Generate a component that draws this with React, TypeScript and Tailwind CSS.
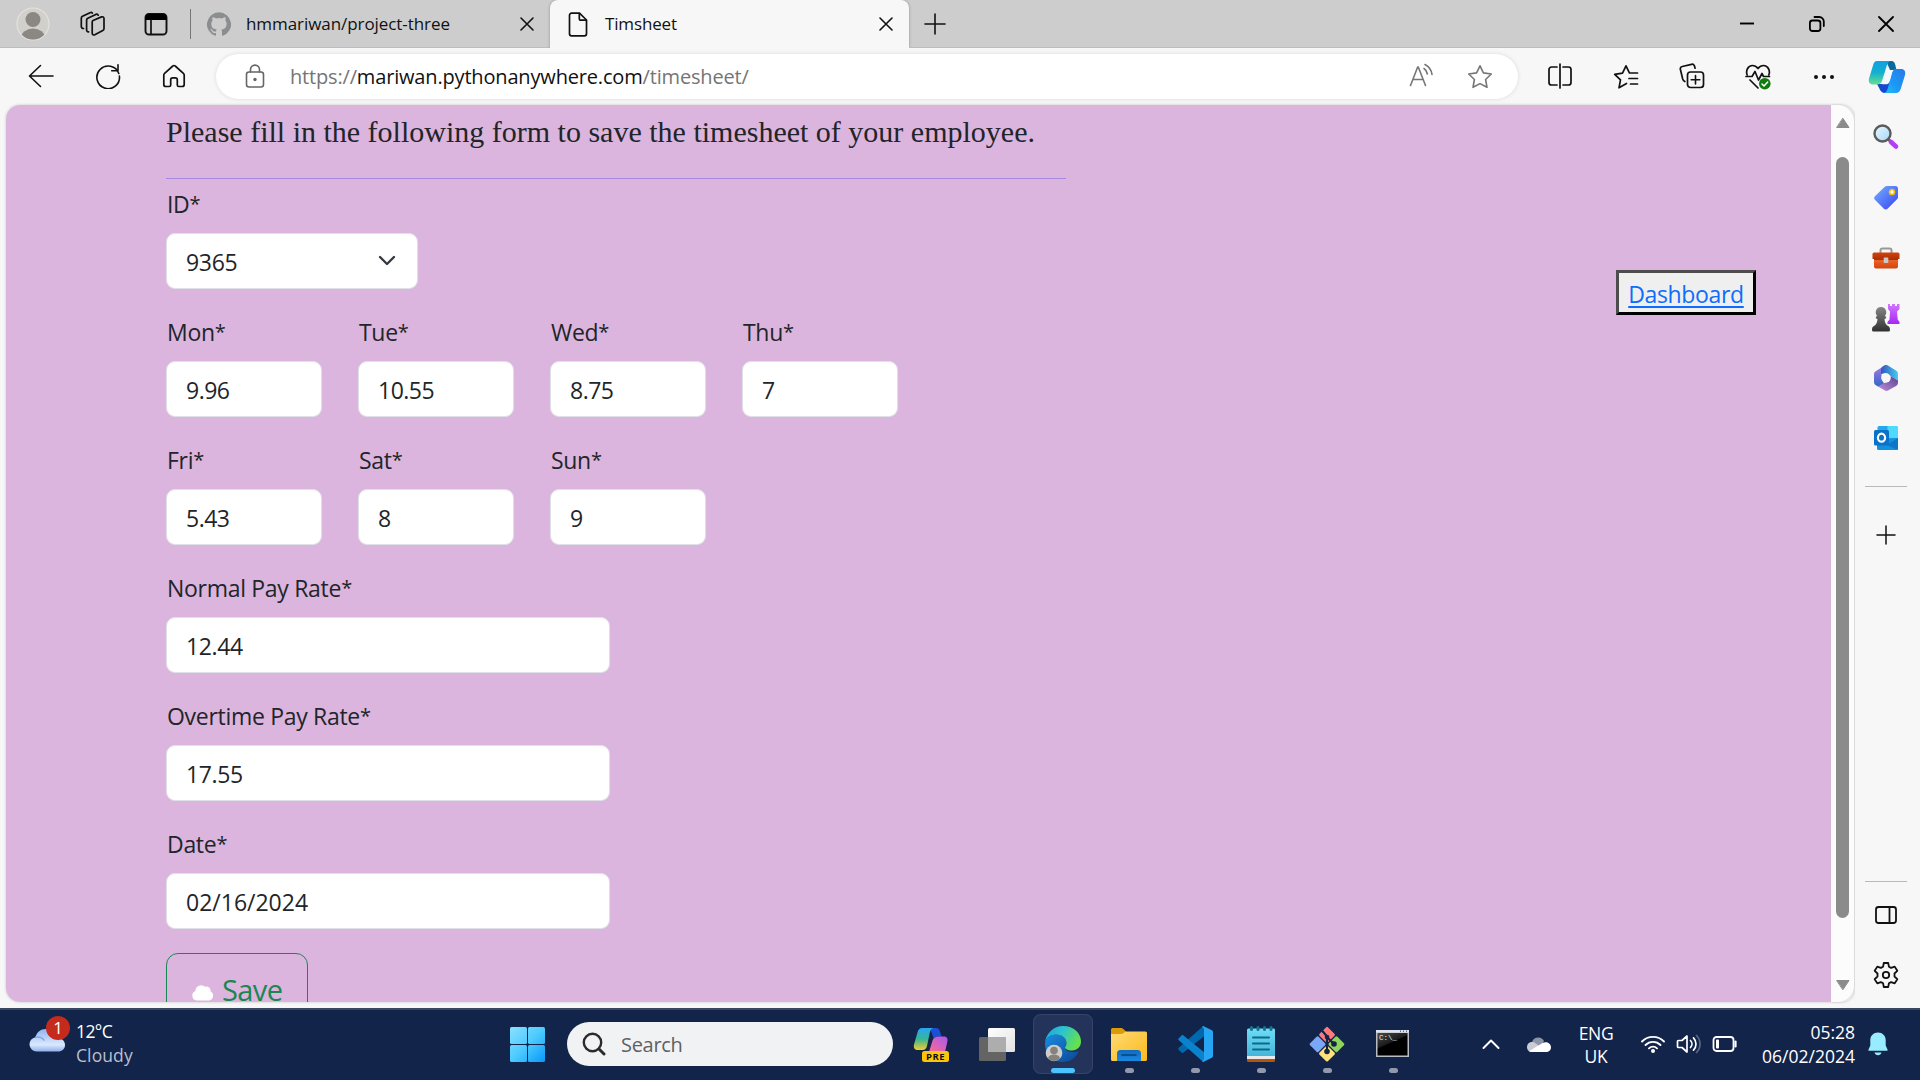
import React from 'react';

type IconProps = {
  w: number;
  h: number;
  className?: string;
  children: React.ReactNode;
};

const Icon = ({ w, h, className = '', children }: IconProps) => (
  <svg
    width={w}
    height={h}
    viewBox={`0 0 ${w} ${h}`}
    className={`block shrink-0 ${className}`}
    fill="none"
    strokeLinecap="round"
    strokeLinejoin="round"
  >
    {children}
  </svg>
);

/* ---------- Tab strip ---------- */

const CloseX = ({ s = 12 }: { s?: number }) => (
  <Icon w={s + 2} h={s + 2}>
    <path d={`M1 1L${s + 1} ${s + 1}M${s + 1} 1L1 ${s + 1}`} stroke="#111" strokeWidth="1.6" />
  </Icon>
);

const TabStrip = () => (
  <div className="flex h-12 items-stretch bg-[#cdcdcd] text-[17px] text-[#111]">
    <div className="flex w-[550px] items-center border-b border-[#bdbdbd]">
      <Icon w={34} h={34} className="ml-4">
        <clipPath id="avatar">
          <circle cx="17" cy="17" r="15.6" />
        </clipPath>
        <circle cx="17" cy="17" r="16" fill="#d2d0cb" stroke="#e4e2dd" strokeWidth="1.2" />
        <g fill="#8b8783" clipPath="url(#avatar)">
          <circle cx="17" cy="12.5" r="7.5" />
          <ellipse cx="17" cy="31" rx="12" ry="9.5" />
        </g>
      </Icon>
      <Icon w={26} h={26} className="ml-[30px]">
        <g stroke="#111" strokeWidth="1.7">
          <path d="M13 9.5l8.500-3.600a1.800 1.800 0 0 1 2.500 1.600v10.200a2 2 0 0 1-1.200 1.800l-8 4.300a1.800 1.800 0 0 1-2.600-1.600V11a1.700 1.700 0 0 1 .8-1.500z" />
          <path d="M8.600 20.800C7.400 21 6.600 20 6.600 19V9.200c0-.9.400-1.500 1.200-1.900l8-3.900c1-.4 2-.2 2.400.8" />
          <path d="M3.500 17.500C2 17.500 1.300 16.500 1.300 15.500V7.200c0-.9.400-1.500 1.200-1.900L10 1.700c1-.4 1.900-.2 2.300.5" />
        </g>
      </Icon>
      <Icon w={24} h={24} className="ml-[38px]">
        <rect x="1.500" y="2" width="21" height="20.500" rx="3.500" stroke="#111" strokeWidth="1.900" />
        <path d="M1.500 8V5.500A3.500 3.500 0 0 1 5 2h14a3.500 3.500 0 0 1 3.500 3.500V8z" fill="#000" />
        <path d="M7 8v14" stroke="#111" strokeWidth="1.700" />
      </Icon>
      <div className="ml-[22px] h-[30px] w-px bg-[#777]" />
      <Icon w={24} h={24} className="ml-4">
        <path
          fill="#8b8e91"
          d="M12 .3a12 12 0 0 0-3.800 23.400c.6.100.8-.3.800-.6v-2c-3.300.7-4-1.600-4-1.600-.6-1.400-1.400-1.800-1.400-1.800-1-.7.100-.7.100-.7 1.200 0 1.900 1.200 1.900 1.200 1 1.800 2.800 1.300 3.500 1 0-.8.400-1.300.7-1.600-2.700-.3-5.500-1.300-5.500-6 0-1.200.5-2.300 1.300-3.100-.2-.4-.6-1.600 0-3.200 0 0 1-.3 3.400 1.200a11.500 11.500 0 0 1 6 0c2.300-1.500 3.300-1.200 3.300-1.200.6 1.600.2 2.800 0 3.200.9.800 1.300 1.900 1.300 3.200 0 4.600-2.800 5.600-5.500 5.900.5.400.9 1 .9 2.200v3.300c0 .3.100.7.800.6A12 12 0 0 0 12 .3"
        />
      </Icon>
      <span className="ml-[15px] w-[274px] tracking-[-0.07px]">hmmariwan/project-three</span>
      <CloseX />
    </div>
    <div className="flex w-[359px] items-center rounded-t-[8px] bg-[#f7f7f7] shadow-[0_0_3px_rgba(0,0,0,0.3)]">
      <Icon w={20} h={25} className="ml-[18px]">
        <path d="M3.500 1.200h8L18.500 8v13.800a2 2 0 0 1-2 2h-13a2 2 0 0 1-2-2V3.200a2 2 0 0 1 2-2z" stroke="#111" strokeWidth="1.700" />
        <path d="M11.300 1.500v5a1.700 1.700 0 0 0 1.700 1.700h5.300" stroke="#111" strokeWidth="1.700" />
      </Icon>
      <span className="ml-[17px] w-[274px] tracking-[-0.15px]">Timsheet</span>
      <CloseX />
    </div>
    <div className="flex flex-1 items-center border-b border-[#bdbdbd]">
      <Icon w={22} h={22} className="ml-[15px]">
        <path d="M11 1v20M1 11h20" stroke="#111" strokeWidth="1.600" />
      </Icon>
      <div className="ml-auto flex items-center pr-[26px]">
        <Icon w={16} h={16}>
          <path d="M1 7.500h14" stroke="#000" strokeWidth="1.900" strokeLinecap="butt" />
        </Icon>
        <Icon w={18} h={18} className="ml-[53px]">
          <rect x="1.900" y="5.500" width="10.500" height="10.500" rx="2.500" stroke="#000" strokeWidth="1.800" />
          <path d="M6.500 2h4.800a4.500 4.500 0 0 1 4.500 4.500v4.600" stroke="#000" strokeWidth="1.800" />
        </Icon>
        <Icon w={16} h={16} className="ml-[52px]">
          <path d="M1 1l14 14M15 1L1 15" stroke="#000" strokeWidth="1.800" />
        </Icon>
      </div>
    </div>
  </div>
);

/* ---------- Toolbar ---------- */

const Toolbar = () => (
  <div className="flex h-[57px] items-center bg-[#f7f7f7]">
    <Icon w={26} h={24} className="mb-[2px] ml-[28px]">
      <path d="M25 12H1.500M12.500 1.500L1.500 12l11 10.500" stroke="#111" strokeWidth="1.600" />
    </Icon>
    <Icon w={26} h={26} className="mb-px ml-[41px]">
      <path d="M23.800 10.500A11.300 11.300 0 1 0 24.400 13" stroke="#111" strokeWidth="1.600" />
      <path d="M23 1.800v6h-6.300" stroke="#111" strokeWidth="1.600" />
    </Icon>
    <Icon w={24} h={24} className="mb-px ml-[41px]">
      <path
        d="M12 1.500c.5 0 .9.200 1.200.5l8.200 7.300c.5.500.8 1.100.8 1.800v9.400a2 2 0 0 1-2 2h-3.400a1.500 1.500 0 0 1-1.500-1.500v-5.200a2 2 0 0 0-2-2h-2.600a2 2 0 0 0-2 2V21a1.500 1.500 0 0 1-1.500 1.500H3.800a2 2 0 0 1-2-2v-9.400c0-.7.300-1.300.8-1.800L10.800 2c.3-.3.700-.5 1.200-.5z"
        stroke="#111"
        strokeWidth="1.700"
      />
    </Icon>
    <div className="ml-[30px] flex h-[45px] w-[1302px] items-center rounded-full bg-white shadow-[0_0_4px_rgba(0,0,0,0.12)]">
      <Icon w={20} h={25} className="ml-[29px]">
        <rect x="1.500" y="8" width="17" height="15" rx="2.500" stroke="#666" strokeWidth="1.600" />
        <path d="M5.500 8V5.600a4.500 4.500 0 0 1 9 0V8" stroke="#666" strokeWidth="1.600" />
        <circle cx="10" cy="15.500" r="1.700" fill="#666" />
      </Icon>
      <span className="ml-[25px] flex-1 text-[20px] tracking-[-0.17px] text-[#757575]">
        https://<span className="text-[#111]">mariwan.pythonanywhere.com</span>/timesheet/
      </span>
      <Icon w={25} h={25} className="mb-[2px]">
        <g stroke="#767676" strokeWidth="1.600">
          <path d="M1.500 22.500L8.700 4h.6l7.200 18.500M4 16.500h10" />
          <path d="M15 5.500c2 1.300 3 3 3.400 5.500" />
          <path d="M16 1.500c4 2.200 6.500 5.500 7 10" />
        </g>
      </Icon>
      <Icon w={26} h={26} className="mr-[25px] ml-[33px]">
        <path d="M13 1.800l3.400 7.100 7.900 1.100-5.700 5.500 1.400 7.800-7-3.700-7 3.700 1.400-7.800L1.700 10l7.900-1.100z" stroke="#767676" strokeWidth="1.600" />
      </Icon>
    </div>
    <Icon w={26} h={26} className="mb-px ml-[29px]">
      <path d="M10 4H4.500a2.500 2.500 0 0 0-2.500 2.500v13A2.500 2.500 0 0 0 4.500 22H10M16 4h5.500A2.500 2.500 0 0 1 24 6.500v13a2.500 2.500 0 0 1-2.500 2.500H16M13 1v24" stroke="#111" strokeWidth="1.700" />
    </Icon>
    <Icon w={26} h={26} className="ml-[40px]">
      <path d="M13.500 19.500L6 23.800l1.500-7.900L1.700 10.300l7.800-1.200L13 1.800l3.400 7.100M17.500 9H24.500M16 14.500h8.500M17.500 20h7" stroke="#111" strokeWidth="1.700" />
    </Icon>
    <Icon w={26} h={26} className="mb-px ml-[40px]">
      <rect x="8.500" y="9" width="16" height="15.500" rx="3" stroke="#111" strokeWidth="1.700" />
      <path d="M16.500 12.500v8.500M12.200 16.700h8.600" stroke="#111" strokeWidth="1.600" />
      <path d="M5.800 18.500C4.500 17.800 4 17 3.700 16L1.400 6.500A2.500 2.500 0 0 1 3.200 3.500L12.500 1.300c1.400-.3 2.400.3 2.900 1.500l.7 2.400" stroke="#111" strokeWidth="1.700" />
    </Icon>
    <Icon w={28} h={28} className="ml-[40px]">
      <path d="M2.200 12C.5 8 2.800 2.500 7.500 2.500c2.800 0 4.300 1.500 5.500 3 1.200-1.500 2.700-3 5.500-3 4.700 0 7 5.500 5.300 9.500M5 17l8 8" stroke="#111" strokeWidth="1.700" />
      <path d="M1 13.500h6l3-5 3.500 8.500 3.500-6.500 1.500 3h6" stroke="#111" strokeWidth="1.700" />
      <circle cx="19.800" cy="20.700" r="5.800" fill="#0f7b0f" />
      <path d="M17 21l2 2 3.700-4" stroke="#fff" strokeWidth="1.500" />
    </Icon>
    <Icon w={22} h={6} className="ml-[40px]">
      <g fill="#111">
        <circle cx="3" cy="3" r="2" />
        <circle cx="11" cy="3" r="2" />
        <circle cx="19" cy="3" r="2" />
      </g>
    </Icon>
    <Icon w={38} h={34} className="ml-[33px]">
      <defs>
        <linearGradient id="cpA" x1="0" y1="0" x2="0" y2="1">
          <stop offset="0" stopColor="#0fa0e0" />
          <stop offset=".5" stopColor="#14b0cf" />
          <stop offset="1" stopColor="#66e08f" />
        </linearGradient>
        <linearGradient id="cpB" x1="1" y1="0" x2="0" y2="1">
          <stop offset="0" stopColor="#2a78e5" />
          <stop offset=".6" stopColor="#1a9af8" />
          <stop offset="1" stopColor="#1bc4f3" />
        </linearGradient>
      </defs>
      <path d="M18 1h5c3 0 3.700 2 4.300 4l1.200 5H22z" fill="#0b6a9c" />
      <path d="M9 24h9l4-3-2 12h-3c-3 0-4.500-2-5.500-4.300z" fill="#1747d1" />
      <path d="M9 1h14c-2.400.4-3.500 2-4.200 4.500l-4.600 15c-.8 2.700-2.500 4-5 4H5c-3.500 0-4.800-2.600-4-6L5 5.500C5.800 2.500 6.700 1 9 1z" fill="url(#cpA)" />
      <path d="M27 9h6c3.500 0 4.800 2.600 4 6l-4 13c-.9 3.400-2.600 5-5 5H16c2-.4 3-2 3.700-4.500l4.300-15.500c.5-2 1.200-3.500 3-4z" fill="url(#cpB)" />
      <path d="M22 10.200h3.500c-1 .8-1.500 2-1.900 3.500l-2.300 8c-.4 1.500-1.200 2.300-2.600 2.600H14c.9-.8 1.300-1.800 1.700-3l2.500-8.300c.6-1.900 1.900-2.800 3.800-2.800z" fill="#f3faff" />
    </Icon>
  </div>
);

/* ---------- Page form ---------- */

type FieldProps = { label: string; value: string; size: 'day' | 'wide' | 'select'; className?: string };

const Field = ({ label, value, size, className = '' }: FieldProps) => {
  const width = size === 'day' ? 'w-[156px]' : size === 'wide' ? 'w-[444px]' : 'w-[252px]';
  return (
    <div className={`h-32 text-[23px] leading-9 text-[#212529] ${className}`}>
      <div className="h-9 pl-px tracking-[-0.3px]">
        {label}
        <span className="align-[2px] text-[20px] leading-none">*</span>
      </div>
      <div className={`mt-[11px] flex h-14 items-center justify-between rounded-[9px] border border-[#dee2e6] bg-white pr-[21px] pl-[19px] ${width}`}>
        <span className="pt-[2px]">{value}</span>
        {size === 'select' && (
          <Icon w={18} h={12}>
            <path d="M2 2l7 7 7-7" stroke="#343a40" strokeWidth="2.400" />
          </Icon>
        )}
      </div>
    </div>
  );
};

const WEEK_ONE = [
  ['Mon', '9.96'],
  ['Tue', '10.55'],
  ['Wed', '8.75'],
  ['Thu', '7'],
];
const WEEK_TWO = [
  ['Fri', '5.43'],
  ['Sat', '8'],
  ['Sun', '9'],
];

const Page = () => (
  <main className="flex flex-1 items-start justify-between overflow-hidden rounded-l-[14px] bg-[#dbb5dd] pr-[75px] pl-40">
    <form className="w-[900px]">
      <p className="pt-[9px] font-['Liberation_Serif',serif] text-[30px] leading-9 text-[#212529]">
        Please fill in the following form to save the timesheet of your employee.
      </p>
      <hr className="mt-7 mb-[7px] border-t border-[#a58be0]" />
      <Field label="ID" value="9365" size="select" className="tracking-[-0.3px]" />
      <div className="flex gap-9">
        {WEEK_ONE.map(([l, v]) => (
          <Field key={l} label={l} value={v} size="day" className="tracking-[-0.5px]" />
        ))}
      </div>
      <div className="flex gap-9">
        {WEEK_TWO.map(([l, v]) => (
          <Field key={l} label={l} value={v} size="day" className="tracking-[-0.5px]" />
        ))}
      </div>
      <Field label="Normal Pay Rate" value="12.44" size="wide" className="tracking-[-0.4px]" />
      <Field label="Overtime Pay Rate" value="17.55" size="wide" className="tracking-[-0.4px]" />
      <Field label="Date" value="02/16/2024" size="wide" />
      <button
        type="button"
        className="mt-[-1px] flex h-[72px] w-[142px] items-center rounded-[12px] border border-[#198754] pl-6 text-[29px] tracking-[-0.6px] text-[#198754]"
      >
        <Icon w={24} h={18} className="mt-2">
          <path d="M5.500 16.500a5 5 0 0 1-1.200-9.500 6 6 0 0 1 9.900-4.300 4 4 0 0 1 5.300 4.500 5 5 0 0 1-1.500 9.300z" fill="#fff" />
        </Icon>
        <span className="ml-[7px] leading-none">Save</span>
      </button>
    </form>
    <button
      type="button"
      className="mt-[165px] h-[45px] w-[140px] border-[3px] border-t-[#4d4d4d] border-r-black border-b-black border-l-[#4d4d4d] bg-[#efefef] pt-[2px] text-[23px] leading-9 tracking-[-0.35px] text-[#0d6efd] underline decoration-2 underline-offset-[3px]"
    >
      Dashboard
    </button>
  </main>
);

const ScrollBar = () => (
  <div className="mr-px flex w-[23px] flex-col items-center rounded-r-[16px] bg-[#fcfcfc] pt-3 pb-[11px] shadow-[1px_0_2px_rgba(0,0,0,0.15)]">
    <Icon w={14} h={12}>
      <path d="M7 1.500L13 10.500H1z" fill="#8b8b8b" stroke="#8b8b8b" />
    </Icon>
    <div className="mt-[28px] w-[13px] flex-1 rounded-full bg-[#8b8b8b]" />
    <Icon w={14} h={12} className="mt-[61px]">
      <path d="M7 10.500L13 1.500H1z" fill="#8b8b8b" stroke="#8b8b8b" />
    </Icon>
  </div>
);

/* ---------- Edge sidebar ---------- */

const SideBar = () => (
  <aside className="flex w-[65px] flex-col items-center bg-[#f7f7f7] pt-[18px] pr-[3px]">
    <Icon w={28} h={28} className="mb-[33px]">
      <defs>
        <linearGradient id="lens" x1="0" y1="0" x2="1" y2="1">
          <stop offset="0" stopColor="#e8f6ff" />
          <stop offset="1" stopColor="#a8d8f8" />
        </linearGradient>
      </defs>
      <path d="M17 17l2.500 2.500" stroke="#666" strokeWidth="3" />
      <path d="M19 19l5 4.500" stroke="#b43cf5" strokeWidth="4.600" />
      <circle cx="10.500" cy="10.500" r="8" fill="url(#lens)" stroke="#5b5b5b" strokeWidth="2.400" />
    </Icon>
    <Icon w={28} h={28} className="mb-[33px]">
      <defs>
        <linearGradient id="tag" x1="0" y1="0" x2="1" y2="1">
          <stop offset="0" stopColor="#74b4ff" />
          <stop offset="1" stopColor="#3a3ff0" />
        </linearGradient>
      </defs>
      <path d="M15 2h8.500C25 2 26 3 26 4.500V13c0 1-.3 1.600-1 2.300l-9.500 9.500c-1 1-2.600 1-3.600 0l-9-9c-1-1-1-2.600 0-3.600L12.500 3c.7-.7 1.500-1 2.500-1z" fill="url(#tag)" />
      <circle cx="20" cy="8" r="2.500" fill="#fff" stroke="#f5bd0c" strokeWidth="1.700" />
    </Icon>
    <Icon w={28} h={28} className="mb-[30px]">
      <defs>
        <linearGradient id="box" x1="0" y1="0" x2="0" y2="1">
          <stop offset="0" stopColor="#d5420d" />
          <stop offset=".45" stopColor="#a93008" />
          <stop offset=".5" stopColor="#ec6125" />
          <stop offset="1" stopColor="#d04410" />
        </linearGradient>
      </defs>
      <path d="M8.500 8V5.500a2 2 0 0 1 2-2h7a2 2 0 0 1 2 2V8" stroke="#999" strokeWidth="2" />
      <path d="M2 7.500h24a1.500 1.500 0 0 1 1.500 1.500v5H26v7.500a2 2 0 0 1-2 2H4a2 2 0 0 1-2-2V14H.5V9A1.500 1.500 0 0 1 2 7.500z" fill="url(#box)" />
      <rect x="11.700" y="12.500" width="4.600" height="5.500" rx=".8" fill="#c9c9c9" />
    </Icon>
    <Icon w={28} h={30} className="mb-[31px]">
      <defs>
        <linearGradient id="pawn" x1="0" y1="0" x2="0" y2="1">
          <stop offset="0" stopColor="#858585" />
          <stop offset="1" stopColor="#303030" />
        </linearGradient>
        <linearGradient id="rook" x1="0" y1="0" x2="0" y2="1">
          <stop offset="0" stopColor="#d077ff" />
          <stop offset="1" stopColor="#a827f2" />
        </linearGradient>
      </defs>
      <path d="M16 1h2v2h2V1h3v2h2V1h2.500v5L25 8.500l.7 8L27.500 19v2h-12v-2l2-2.500.5-8L16 6z" fill="url(#rook)" />
      <path d="M9 4a5.200 5.200 0 0 1 3.700 8.900c2 .3 2 2.600-.2 3.100.2 2.800.9 5 2.700 6.500 2 .7 2.800 2 2.800 4.500a1.500 1.500 0 0 1-1.500 1.500h-15A1.500 1.500 0 0 1 0 27c0-2.500.8-3.800 2.800-4.500C4.600 21 5.300 18.800 5.500 16c-2.200-.5-2.200-2.800-.2-3.100A5.200 5.200 0 0 1 9 4z" fill="url(#pawn)" />
    </Icon>
    <Icon w={26} h={28} className="mb-[33px]">
      <defs>
        <linearGradient id="mA" x1="0" y1="0" x2="1" y2="0">
          <stop offset="0" stopColor="#3355bd" />
          <stop offset="1" stopColor="#45cdf0" />
        </linearGradient>
        <linearGradient id="mB" x1="1" y1="0" x2="0" y2="1">
          <stop offset="0" stopColor="#56408f" />
          <stop offset="1" stopColor="#c18fdc" />
        </linearGradient>
        <linearGradient id="mC" x1="0" y1="0" x2="0" y2="1">
          <stop offset="0" stopColor="#a878e0" />
          <stop offset="1" stopColor="#2f67c9" />
        </linearGradient>
      </defs>
      <path d="M11 2L3 7C1.500 8 1 9 1 10.500V18c0 1.500.7 2.600 2 3.300l2.500 1.400L11 19.500 8.500 14V8z" fill="url(#mC)" />
      <path d="M8 10V5.500C8 4 8.700 3 10 2.200l1.500-.9c1-.5 2-.5 3 0L23 6.500C24.500 7.500 25 8.500 25 10v6.500L17.500 12 13 9z" fill="url(#mA)" />
      <path d="M17.500 12l7.500 4.500V18c0 2-.5 3-2 4l-8 4.500c-1 .6-2 .6-3 0l-7-4 4.500-2.500 7.500-4z" fill="url(#mB)" />
      <circle cx="13" cy="14" r="4.700" fill="#f7f7f7" />
    </Icon>
    <Icon w={26} h={26}>
      <rect x="4.500" y="1" width="20" height="23" rx="1.500" fill="#28a8ea" />
      <path d="M14.500 1h9A1.500 1.500 0 0 1 25 2.500V13H14.500z" fill="#50d9ff" />
      <path d="M4 14l21-1v10.500A1.500 1.500 0 0 1 23.500 25h-18A1.500 1.500 0 0 1 4 23.500z" fill="#1490df" />
      <path d="M25 13L14 20l11 5z" fill="#0a66b5" opacity=".6" />
      <rect x="1" y="5" width="15" height="15.500" rx="1.500" fill="#0873c9" />
      <ellipse cx="8.500" cy="12.700" rx="3.600" ry="4" stroke="#fff" strokeWidth="2.200" />
    </Icon>
    <div className="mt-[35px] h-px w-[42px] bg-[#b9b9b9]" />
    <Icon w={20} h={20} className="mt-[38px]">
      <path d="M10 1v18M1 10h18" stroke="#111" strokeWidth="1.500" />
    </Icon>
    <div className="mt-auto h-px w-[42px] bg-[#b9b9b9]" />
    <Icon w={24} h={20} className="mt-[23px]">
      <rect x="2" y="2" width="20" height="16" rx="2.500" stroke="#111" strokeWidth="1.800" />
      <path d="M15.500 2v16" stroke="#111" strokeWidth="1.800" />
    </Icon>
    <Icon w={26} h={28} className="mt-[36px] mb-[19px]">
      <path
        d="M10.800 2h4.400l.7 3.700 2.200 1.200 3.600-1.300 2.600 4.200L21.500 12.500v3l2.800 2.700-2.600 4.200-3.600-1.300-2.200 1.200-.7 3.700h-4.400l-.7-3.700-2.200-1.200-3.600 1.300-2.600-4.200 2.800-2.700v-3L1.700 9.800l2.600-4.200 3.600 1.300 2.200-1.200z"
        stroke="#111"
        strokeWidth="1.800"
      />
      <circle cx="13" cy="14" r="3.200" stroke="#111" strokeWidth="1.800" />
    </Icon>
  </aside>
);

/* ---------- Taskbar ---------- */

type AppSlotProps = { children: React.ReactNode; active?: boolean; running?: boolean };

const AppSlot = ({ children, active = false, running = true }: AppSlotProps) => (
  <div
    className={`mr-[6px] flex h-[60px] w-[60px] flex-col items-center rounded-[8px] pt-[12px] ${
      active ? 'bg-[#243359] ring-1 ring-[#35426a] ring-inset' : ''
    }`}
  >
    {children}
    {active && <div className="mt-[6px] h-[5px] w-6 shrink-0 rounded-full bg-[#4cc2ff]" />}
    {!active && running && <div className="mt-[6px] h-[5px] w-[9px] shrink-0 rounded-full bg-[#9299ad]" />}
  </div>
);

const TaskBar = () => (
  <footer className="flex h-[72px] items-start border-t-2 border-[#3a4763] bg-[#12244a] pt-[4px] text-[17.500px] text-white">
    <div className="flex h-[60px] w-[506px] items-start">
      <div className="relative mt-[13px] ml-[29px]">
        <Icon w={37} h={26}>
          <defs>
            <linearGradient id="wx" x1="0" y1="0" x2="0" y2="1">
              <stop offset="0" stopColor="#8fb4f2" />
              <stop offset=".7" stopColor="#dbe8fc" />
              <stop offset="1" stopColor="#8fb0ee" />
            </linearGradient>
          </defs>
          <path d="M7.500 24.500a7.200 7.200 0 0 1-1-14.300C8 5 11.500 2 16.500 2c6 0 9.500 3.500 10.500 9 5.500-.5 9 2.500 9 7 0 4-3 6.500-7 6.500z" fill="url(#wx)" />
          <path d="M6.500 10.200c4-.8 7 .5 8.500 3" stroke="#86a8e8" strokeWidth="1.500" />
        </Icon>
        <div className="absolute -top-[11px] left-[17px] flex size-6 items-center justify-center rounded-full bg-[#c42b1c] text-[17px]">1</div>
      </div>
      <div className="mt-[5px] ml-[10px] leading-6">
        <div className="tracking-[-0.6px]">12°C</div>
        <div className="tracking-[0.1px] text-[#b9bfcd]">Cloudy</div>
      </div>
    </div>
    <Icon w={42} h={60}>
      <defs>
        <linearGradient id="win" x1="4" y1="13" x2="39" y2="48" gradientUnits="userSpaceOnUse">
          <stop offset="0" stopColor="#8be0ff" />
          <stop offset=".5" stopColor="#4ccbff" />
          <stop offset="1" stopColor="#0a98f8" />
        </linearGradient>
      </defs>
      <g fill="url(#win)">
        <rect x="4" y="13" width="17" height="17" rx="1.500" />
        <rect x="22" y="13" width="17" height="17" rx="1.500" />
        <rect x="4" y="31" width="17" height="17" rx="1.500" />
        <rect x="22" y="31" width="17" height="17" rx="1.500" />
      </g>
    </Icon>
    <div className="mt-2 ml-[19px] flex h-11 w-[326px] items-center rounded-full bg-[#f1f2f4]">
      <Icon w={24} h={24} className="ml-[15px]">
        <circle cx="10.500" cy="10.500" r="8.700" stroke="#2b2b2b" strokeWidth="2.400" />
        <path d="M17 17l5 5" stroke="#2b2b2b" strokeWidth="3" />
      </Icon>
      <span className="ml-[15px] pt-px text-[20px] tracking-[-0.3px] text-[#5f6063]">Search</span>
    </div>
    <div className="ml-[8px] flex">
      <AppSlot running={false}>
        <Icon w={36} h={36}>
          <defs>
            <linearGradient id="pA" x1="0" y1="0" x2="0" y2="1">
              <stop offset="0" stopColor="#2aa4f4" />
              <stop offset=".5" stopColor="#35b795" />
              <stop offset="1" stopColor="#f5cf2a" />
            </linearGradient>
            <linearGradient id="pB" x1="1" y1="0" x2="0" y2="1">
              <stop offset="0" stopColor="#a65af0" />
              <stop offset="1" stopColor="#ff6b8a" />
            </linearGradient>
          </defs>
          <path d="M17 2h6c2.500 0 3.300 1.500 4 3.500l1.500 5H25c-2 0-3.500 1-4 3z" fill="#1c4fd8" />
          <path d="M9 2h11.500c-2 .5-3 2-3.700 4.500L14 20c-.7 2.700-2 4-4.500 4H4.500C1.500 24 .3 21.500 1 18.500L4.500 6.500C5.300 3.500 6.500 2 9 2z" fill="url(#pA)" />
          <path d="M26 10.500h5c3 0 4 2.300 3.300 5.500L32 26H16l3.500-11.500c.8-2.700 3.500-4 6.500-4z" fill="url(#pB)" />
          <rect x="9" y="25" width="27" height="11" rx="2.500" fill="#fcc50b" />
          <text x="22.500" y="33.900" textAnchor="middle" fontSize="9.500" fontWeight="700" letterSpacing=".4" fill="#111">PRE</text>
        </Icon>
      </AppSlot>
      <AppSlot running={false}>
        <Icon w={36} h={36}>
          <defs>
            <linearGradient id="tv" x1="0" y1="0" x2="1" y2="1">
              <stop offset="0" stopColor="#fff" />
              <stop offset="1" stopColor="#e2e2e2" />
            </linearGradient>
          </defs>
          <rect x="0" y="11" width="27" height="24" rx="1.500" fill="#646464" />
          <rect x="9" y="2" width="27" height="24" rx="1.500" fill="url(#tv)" />
          <path d="M9 11h18v15H9z" fill="#adadad" />
        </Icon>
      </AppSlot>
      <AppSlot active>
        <Icon w={36} h={36}>
          <defs>
            <linearGradient id="eA" x1="0" y1="0" x2="1" y2=".4">
              <stop offset="0" stopColor="#1f9fe0" />
              <stop offset=".5" stopColor="#2cc4cf" />
              <stop offset="1" stopColor="#63e04f" />
            </linearGradient>
            <linearGradient id="eB" x1="0" y1="0" x2="1" y2="1">
              <stop offset="0" stopColor="#1a8de0" />
              <stop offset="1" stopColor="#0c4594" />
            </linearGradient>
          </defs>
          <path d="M0 18c0-5 5-9.500 11-9.500 5.500 0 10.500 3 10.500 8 0 2-1.500 3-1.500 5 0 3 4 4.500 8 4.500 3 0 4.500-.8 5.500-.8C31 32 25 36 18 36 8 36 0 28 0 18z" fill="url(#eB)" />
          <path d="M0 17C.8 7.500 8.500 0 18 0c11 0 18 7.500 18 15.500 0 5.500-4 9-9 9-4 0-7-1.500-7-3 0-1 1.500-1.500 1.500-4.500 0-5-4.500-8.500-10.500-8.500C5.500 8.500 1 12 0 17z" fill="url(#eA)" />
          <circle cx="9" cy="27" r="8.300" fill="#cfcdc9" />
          <circle cx="9" cy="24.500" r="3.800" fill="#85817c" />
          <path d="M3 32.500c.5-3 3-4 6-4s5.500 1 6 4a8.300 8.300 0 0 1-12 0z" fill="#85817c" />
        </Icon>
      </AppSlot>
      <AppSlot>
        <Icon w={36} h={36}>
          <defs>
            <linearGradient id="fo" x1="0" y1="0" x2="1" y2="1">
              <stop offset="0" stopColor="#ffdb74" />
              <stop offset="1" stopColor="#fbb81c" />
            </linearGradient>
            <linearGradient id="fb" x1="0" y1="0" x2="0" y2="1">
              <stop offset="0" stopColor="#0f6cc0" />
              <stop offset="1" stopColor="#1c88e0" />
            </linearGradient>
          </defs>
          <path d="M0 3.500A1.500 1.500 0 0 1 1.500 2H10c1 0 1.500.3 2 .8L15 5.500V12H0z" fill="#dc9c08" />
          <path d="M0 8h10c1.500 0 2.300-.5 3-1.200.8-.8 1.500-1.300 3-1.300h18.500A1.500 1.500 0 0 1 36 7v26.500A1.500 1.500 0 0 1 34.500 35h-33A1.500 1.500 0 0 1 0 33.500z" fill="url(#fo)" />
          <path d="M6 35v-7.500a3.500 3.500 0 0 1 3.500-3.500h17a3.500 3.500 0 0 1 3.500 3.500V35z" fill="url(#fb)" />
          <path d="M11 29h14" stroke="#07427f" strokeWidth="1.600" />
        </Icon>
      </AppSlot>
      <AppSlot>
        <Icon w={36} h={36}>
          <path d="M1.500 23.500l3 3c.6.600 1.300.6 2 .1L28 9.500V1L26 .3 1.500 22c-.5.500-.5 1 0 1.500z" fill="#0069ad" />
          <path d="M1.500 12.500l3-3c.6-.6 1.300-.6 2-.1L28 27v8l-2 .7L1.500 14c-.5-.5-.5-1 0-1.500z" fill="#0a83cf" />
          <path d="M26.500.2L34.500 4c1 .5 1.500 1.200 1.500 2.200v23.600c0 1-.5 1.700-1.500 2.200l-8 3.800c-.8.300-1.300-.2-1-1 .9-.7 1.500-1.300 1.500-2.300v-29c0-1-.6-1.600-1.500-2.300-.3-.8.200-1.300 1-1z" fill="#27a4f2" />
        </Icon>
      </AppSlot>
      <AppSlot>
        <Icon w={28} h={36}>
          <defs>
            <linearGradient id="np" x1="0" y1="0" x2="0" y2="1">
              <stop offset="0" stopColor="#6fdcf5" />
              <stop offset="1" stopColor="#45b5da" />
            </linearGradient>
          </defs>
          <rect x="0" y="25" width="28" height="11" rx="1.500" fill="#b4550c" />
          <rect x="0" y="24" width="28" height="9" fill="#e9e9e9" />
          <path d="M0 4a1.500 1.500 0 0 1 1.500-1.500h25A1.500 1.500 0 0 1 28 4v26H0z" fill="url(#np)" />
          <path d="M4.500 1.500v2M11 1.500v2M17.500 1.500v2M24 1.500v2" stroke="#13768f" strokeWidth="3" />
          <path d="M6 11.500h16M6 17.500h16M6 23.500h16" stroke="#0b6a88" strokeWidth="2" />
        </Icon>
      </AppSlot>
      <AppSlot>
        <Icon w={36} h={36}>
          <g transform="rotate(45 18 18)">
            <rect x="5.500" y="5.500" width="12" height="12" rx="1.500" fill="#ff7b7b" />
            <rect x="18.800" y="5.500" width="12" height="12" rx="1.500" fill="#8fd45c" />
            <rect x="5.500" y="18.800" width="12" height="12" rx="1.500" fill="#7aa7f7" />
            <rect x="18.800" y="18.800" width="12" height="12" rx="1.500" fill="#ffe27a" />
          </g>
          <path d="M13 4.500l5 6v14.500M18 11l6.500 6.500" stroke="#12244a" strokeWidth="2.200" />
          <g fill="#12244a">
            <circle cx="18" cy="11" r="2.300" />
            <circle cx="18" cy="25.500" r="2.800" />
            <circle cx="25" cy="18" r="2.800" />
          </g>
        </Icon>
      </AppSlot>
      <AppSlot>
        <Icon w={34} h={36}>
          <defs>
            <linearGradient id="cm" x1="0" y1="0" x2=".6" y2="1">
              <stop offset="0" stopColor="#4a4a4a" />
              <stop offset=".5" stopColor="#1a1a1a" />
              <stop offset=".52" stopColor="#000" />
            </linearGradient>
          </defs>
          <rect x="0" y="4" width="33" height="27" fill="#b9bcc2" />
          <rect x="0" y="4" width="33" height="2.500" fill="#dfe4ec" />
          <path d="M24 5.200h7" stroke="#59709c" strokeWidth="1.500" strokeDasharray="1 2" strokeLinecap="butt" />
          <rect x="1.500" y="7" width="30" height="22.500" fill="url(#cm)" />
          <text x="3" y="14" fontSize="7.500" fontFamily="Liberation Mono" fill="#eee">C:\_</text>
        </Icon>
      </AppSlot>
    </div>
    <div className="ml-auto flex h-[60px] items-center pr-[31px]">
      <Icon w={18} h={12}>
        <path d="M1.500 10L9 2.500l7.500 7.500" stroke="#fff" strokeWidth="2" />
      </Icon>
      <Icon w={26} h={18} className="ml-[26px]">
        <path d="M6 7a6.500 6.500 0 0 1 12-1l-3 5z" fill="#8d95a8" />
        <path d="M1 12c0-4 4-6 7.500-4.500L20 14.500 6 17c-3 0-5-2-5-5z" fill="#c9ccd4" />
        <path d="M3 16.200L16.500 8C20 5.800 25 8 25 12.200c0 2.800-2 4.800-5 4.800H6c-1.200 0-2.200-.3-3-.8z" fill="#fff" />
      </Icon>
      <div className="ml-[24px] w-[40px] pt-px text-center leading-[23px] tracking-[-0.3px]">
        ENG
        <br />
        UK
      </div>
      <Icon w={26} h={20} className="ml-[24px]">
        <g stroke="#fff" strokeWidth="1.900">
          <path d="M2 7.500a15.500 15.500 0 0 1 22 0M5.500 11a10.500 10.500 0 0 1 15 0M9 14.300a5.600 5.600 0 0 1 8 0" />
        </g>
        <circle cx="13" cy="17" r="2" fill="#fff" />
      </Icon>
      <Icon w={26} h={20} className="ml-[10px]">
        <g strokeWidth="1.700">
          <path d="M11 2L6 6.500H2.500a1 1 0 0 0-1 1v5a1 1 0 0 0 1 1H6l5 4.500z" stroke="#fff" />
          <path d="M14.500 6.500a5 5 0 0 1 0 7M17.500 3.800a9 9 0 0 1 0 12.400" stroke="#fff" />
          <path d="M20.500 1.500a12 12 0 0 1 0 17" stroke="#5a6683" />
        </g>
      </Icon>
      <Icon w={26} h={18} className="ml-[10px]">
        <rect x="1.500" y="2" width="20" height="14" rx="3" stroke="#fff" strokeWidth="1.800" />
        <rect x="4" y="4.500" width="3" height="9" rx=".8" fill="#fff" />
        <path d="M23.500 6.500v5" stroke="#fff" strokeWidth="2.200" />
      </Icon>
      <div className="ml-[17px] w-[100px] text-right leading-6">
        05:28
        <br />
        06/02/2024
      </div>
      <Icon w={22} h={26} className="ml-[12px]">
        <path d="M11 1.500c4.500 0 7.700 3.300 7.700 7.500v5.500l2 4.500c0 .5-.3.800-.8.800H2.100c-.5 0-.8-.3-.8-.8l2-4.500V9c0-4.200 3.200-7.500 7.700-7.500z" fill="#99ebff" />
        <path d="M7.500 21.500h7c-.5 1.700-1.800 2.700-3.500 2.700s-3-1-3.500-2.700z" fill="#99ebff" />
      </Icon>
    </div>
  </footer>
);

export default function App() {
  return (
    <div className="flex h-[1080px] w-[1920px] flex-col overflow-hidden bg-[#f7f7f7] font-['Open_Sans','Noto_Sans',sans-serif]">
      <TabStrip />
      <Toolbar />
      <div className="flex h-[903px]">
        <div className="mb-[6px] ml-[6px] flex flex-1 rounded-[14px] shadow-[0_0_3px_rgba(0,0,0,0.2)]">
          <Page />
          <ScrollBar />
        </div>
        <SideBar />
      </div>
      <TaskBar />
    </div>
  );
}
